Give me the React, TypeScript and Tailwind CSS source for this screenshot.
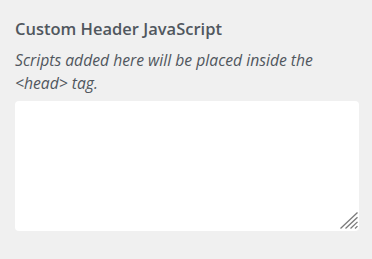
export default function App() {
  return (
    <div className="min-h-screen w-[372px] bg-[#f0f0f0] px-[15px] pt-[17px] pb-[28px] text-[#50575e] font-['Open_Sans',sans-serif]">
      {/* Title */}
      <h2 className="text-[16.5px] font-semibold leading-[24px] mb-[8px]">Custom Header JavaScript</h2>

      {/* Description */}
      <p className="text-[15.7px] italic leading-[23px] mb-[6px] w-[310px]">
        Scripts added here will be placed inside the &lt;head&gt; tag.
      </p>

      {/* Editor */}
      <div className="relative w-[344px] h-[130px]">
        <textarea
          className="block w-full h-full rounded-[4px] bg-white border-0 outline-none resize-none p-2"
          spellCheck={false}
        />
        <svg
          className="absolute right-[1px] bottom-[2px] pointer-events-none"
          width="18"
          height="17"
          viewBox="0 0 18 17"
        >
          <g stroke="#7a7a7a" strokeWidth="1.3">
            <line x1="0.5" y1="16.5" x2="17.5" y2="0.5" />
            <line x1="5.5" y1="16.5" x2="17.5" y2="5.2" />
            <line x1="10.5" y1="16.5" x2="17.5" y2="9.9" />
            <line x1="15" y1="16.5" x2="17.5" y2="14.1" />
          </g>
        </svg>
      </div>
    </div>
  );
}
